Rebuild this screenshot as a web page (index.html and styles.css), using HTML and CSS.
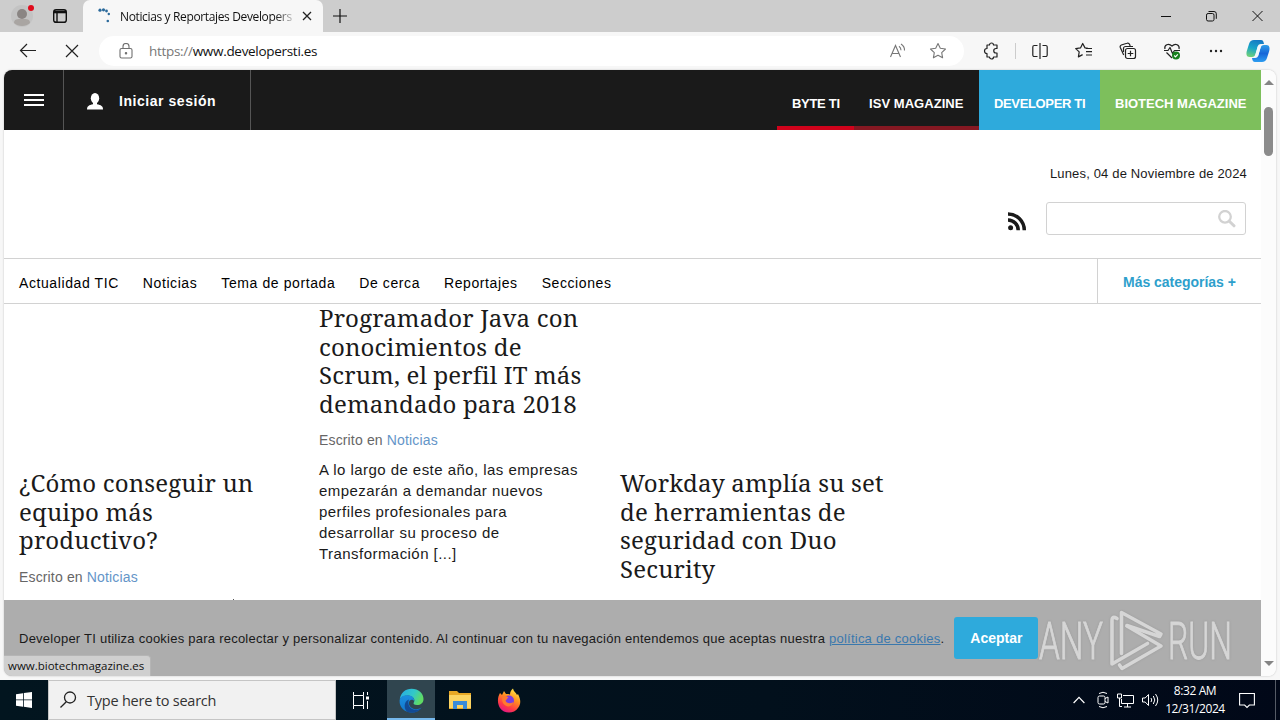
FILE: index.html
```html
<!DOCTYPE html>
<html lang="es">
<head>
  <meta charset="UTF-8" />
  <title>Noticias y Reportajes Developers</title>
  <link rel="stylesheet" href="styles.css">
</head>
<body>

<div class="tabstrip">
  <svg class="profile" width="24" height="26" viewBox="0 0 24 26">
    <circle cx="12" cy="13" r="11" fill="#c3c3c3"/>
    <circle cx="12" cy="11" r="5" fill="#8a8583"/>
    <path d="M4 20c0-4 3-4 8-4s8 0 8 4c-2 2-5 3-8 3s-6-1-8-3z" fill="#a9a5a2"/>
    <circle cx="21" cy="5" r="3" fill="#e00b1c"/>
  </svg>
  <svg class="tab-menu" width="16" height="16" viewBox="0 0 16 16" fill="none" stroke="#111" stroke-width="1.4">
    <rect x="1.7" y="1.7" width="12.6" height="12.6" rx="2.4"/>
    <path d="M2 4h12" stroke-width="2.6"/>
    <path d="M5 4v10"/>
  </svg>
  <div class="tab">
    <svg class="spinner" width="16" height="16" viewBox="0 0 16 16" fill="#2b6a9b">
      <circle cx="3" cy="2.2" r="1.6"/><circle cx="6.5" cy="1.8" r="1.6"/><circle cx="9.5" cy="3" r="1.4"/>
      <circle cx="11.8" cy="6" r="1.2"/><circle cx="10.8" cy="13" r="1.3"/>
    </svg>
    <span class="tab-title">Noticias y Reportajes Developers</span>
    <svg width="10" height="10" viewBox="0 0 10 10" stroke="#222" stroke-width="1.3"><path d="M1 1l8 8M9 1l-8 8"/></svg>
  </div>
  <svg class="new-tab" width="14" height="14" viewBox="0 0 14 14" stroke="#111" stroke-width="1.2"><path d="M7 0v14M0 7h14"/></svg>
  <div class="window-buttons">
    <svg width="10" height="12" viewBox="0 0 10 12" stroke="#111"><path d="M0 6.5h10"/></svg>
    <svg width="11" height="12" viewBox="0 0 11 12" fill="none" stroke="#111"><rect x=".5" y="3.5" width="7.5" height="7.5" rx="1.6"/><path d="M2.5 1.5h5.5a2.3 2.3 0 0 1 2.3 2.3v5"/></svg>
    <svg width="11" height="12" viewBox="0 0 11 12" stroke="#111"><path d="M.5 1l10 10M10.5 1l-10 10"/></svg>
  </div>
</div>

<div class="toolbar">
  <svg class="back" width="18" height="16" viewBox="0 0 18 16" fill="none" stroke="#222" stroke-width="1.2"><path d="M17 7.5H1.5M8 1L1.5 7.5 8 14"/></svg>
  <svg class="stop" width="14" height="14" viewBox="0 0 14 14" stroke="#222" stroke-width="1.2"><path d="M1 1l12 12M13 1L1 13"/></svg>
  <div class="address">
    <svg class="lock" width="14" height="16" viewBox="0 0 14 16" fill="none" stroke="#707070" stroke-width="1.1">
      <rect x="1" y="5.5" width="12" height="9.5" rx="1.6"/><path d="M4 5.5V3.5a3 3 0 0 1 6 0v2"/><circle cx="7" cy="10.2" r=".7" fill="#707070"/>
    </svg>
    <span class="url"><i>https://</i>www.developersti.es</span>
    <svg class="read" width="18" height="16" viewBox="0 0 18 16" fill="none" stroke="#777" stroke-width="1.1">
      <path d="M1.5 14L6.5 2.5l5 11.5M3.2 10.5h6.6M10 3.2q2 1.5 2 4M12 1q3.8 2.5 3.5 6.5"/>
    </svg>
    <svg class="star" width="18" height="18" viewBox="0 0 18 18" fill="none" stroke="#777" stroke-width="1.1" stroke-linejoin="round">
      <path d="M9 1.5l2.3 4.8 5.2.7-3.8 3.6.9 5.2L9 13.3l-4.6 2.5.9-5.2L1.5 7l5.2-.7z"/>
    </svg>
  </div>
  <div class="tools">
    <svg width="18" height="18" viewBox="0 0 18 18" fill="none" stroke="#222" stroke-width="1.2" stroke-linejoin="round">
      <path d="M5 3h2.500a2 2 0 0 1 4 0h3.500v3.500h-1a2 2 0 0 0 0 4.500h1v4h-3.500a2 2 0 0 1-4 0H5v-3.500a2.300 2.300 0 0 1 0-5z"/>
    </svg>
    <b class="divider"></b>
    <svg width="18" height="18" viewBox="0 0 18 18" fill="none" stroke="#222" stroke-width="1.2">
      <path d="M9 1v16M6.5 3.5H3.2a1.4 1.4 0 0 0-1.4 1.4v8.2a1.4 1.4 0 0 0 1.4 1.4h3.3M11.500 3.500h3.300a1.400 1.400 0 0 1 1.400 1.400v8.200a1.400 1.400 0 0 1-1.400 1.400h-3.300"/>
    </svg>
    <svg width="18" height="18" viewBox="0 0 18 18" fill="none" stroke="#222" stroke-width="1.2" stroke-linejoin="round">
      <path d="M13 6.3l-3-.4L7.7 1.5 5.5 5.9l-4.8.7 3.5 3.3-.8 5 4.2-2.3M11 6.5h6M11 9.700h6M11 13h6"/>
    </svg>
    <svg width="18" height="18" viewBox="0 0 18 18" fill="none" stroke="#222" stroke-width="1.2" stroke-linejoin="round">
      <rect x="6.5" y="6.5" width="10" height="10" rx="2"/><path d="M11.5 8.7v5.6M8.7 11.5h5.6M4.700 13L1.300 5.500A2 2 0 0 1 2.300 3L8 1.300a2 2 0 0 1 2.500 1l.7 1.700M4.500 10V6.500a2 2 0 0 1 2-2H14"/>
    </svg>
    <svg width="18" height="18" viewBox="0 0 18 18" fill="none" stroke="#222" stroke-width="1.2" stroke-linejoin="round">
      <path d="M2 7C.8 3 5.5.5 9 4c3.5-3.5 8-1 7 3M1 8.500h4l2-3 2.500 6 2-3h5.500M3.500 10.500L9 16"/>
      <circle cx="13" cy="13.5" r="4" fill="#16801c" stroke="none"/><path d="M11.2 13.5l1.3 1.3 2.3-2.4" stroke="#fff"/>
    </svg>
    <svg width="18" height="18" viewBox="0 0 18 18" fill="#222"><circle cx="4" cy="9" r="1.2"/><circle cx="9" cy="9" r="1.2"/><circle cx="14" cy="9" r="1.2"/></svg>
  </div>
  <svg class="copilot" width="24" height="24" viewBox="0 0 24 24">
    <defs>
      <linearGradient id="cp1" x1=".6" y1="0" x2=".3" y2="1"><stop offset="0" stop-color="#1579c4"/><stop offset=".5" stop-color="#18a5c9"/><stop offset="1" stop-color="#6fd07a"/></linearGradient>
      <linearGradient id="cp2" x1="0" y1="0" x2="0" y2="1"><stop offset="0" stop-color="#2f9ee8"/><stop offset=".5" stop-color="#1766d8"/><stop offset="1" stop-color="#2d9df0"/></linearGradient>
    </defs>
    <path d="M8 1h7c2 0 2.5 1.5 3 4h-3c-2 0-3 1-3.5 3l-2 7c-.6 2-1.5 3-3.5 3H3.500C.5 18 0 15 .8 12L3 5c.8-2.500 2.500-4 5-4z" fill="url(#cp1)"/>
    <path d="M16 23H9c-2 0-2.5-1.5-3-4h3c2 0 3-1 3.5-3l2-7c.6-2 1.500-3 3.500-3h2.500c3 0 3.500 3 2.700 6L21 19c-.8 2.500-2.500 4-5 4z" fill="url(#cp2)"/>
    <path d="M12 7h3l-3 10H9z" fill="#f2f8fc"/>
  </svg>
</div>

<div class="viewport">
  <div class="page">
    <header class="topbar">
      <div class="burger"><span></span><span></span><span></span></div>
      <div class="login">
        <svg width="16" height="17" viewBox="0 0 16 17" fill="#fff"><ellipse cx="8" cy="5.3" rx="4.2" ry="5.2"/><path d="M0 16.5c0-3.5 2-4.5 6-5.3V9h4v2.200c4 .8 6 1.800 6 5.300z"/></svg>
        Iniciar sesión
      </div>
      <nav class="sites">
        <a class="byte">BYTE TI</a>
        <a class="isv">ISV MAGAZINE</a>
        <a class="dev">DEVELOPER TI</a>
        <a class="bio">BIOTECH MAGAZINE</a>
      </nav>
    </header>

    <div class="masthead">
      <div class="date">Lunes, 04 de Noviembre de 2024</div>
      <div class="search-row">
        <svg class="rss" width="19" height="19" viewBox="0 0 19 19" fill="none" stroke="#1a1a1a" stroke-width="3.5">
          <circle cx="2.6" cy="15.8" r="2.5" fill="#1a1a1a" stroke="none"/><path d="M0 8a10.200 10.200 0 0 1 10.200 10.300M0 1.900a16.300 16.300 0 0 1 16.300 16.400"/>
        </svg>
        <div class="search-box">
          <svg width="18" height="18" viewBox="0 0 18 18" fill="none" stroke="#d2d2d2"><circle cx="7" cy="6.8" r="5.8" stroke-width="2.3"/><path d="M11.3 11.2l4.7 4.6" stroke-width="3" stroke-linecap="round"/></svg>
        </div>
      </div>
    </div>

    <nav class="categories">
      <a>Actualidad TIC</a>
      <a>Noticias</a>
      <a>Tema de portada</a>
      <a>De cerca</a>
      <a>Reportajes</a>
      <a>Secciones</a>
      <a class="more">Más categorías +</a>
    </nav>

    <main class="articles">
      <article class="lower">
        <h2>¿Cómo conseguir un<br>equipo más<br>productivo?</h2>
        <p class="meta">Escrito en <a>Noticias</a></p>
        <div class="accent"></div>
      </article>
      <article>
        <h2>Programador Java con<br>conocimientos de<br>Scrum, el perfil IT más<br>demandado para 2018</h2>
        <p class="meta">Escrito en <a>Noticias</a></p>
        <p class="excerpt">A lo largo de este año, las empresas<br>empezarán a demandar nuevos<br>perfiles profesionales para<br>desarrollar su proceso de<br>Transformación [...]</p>
      </article>
      <article class="lower">
        <h2>Workday amplía su set<br>de herramientas de<br>seguridad con Duo<br>Security</h2>
      </article>
    </main>

    <div class="cookies">
      <span>Developer TI utiliza cookies para recolectar y personalizar contenido. Al continuar con tu navegación entendemos que aceptas nuestra <a>política de cookies</a>.</span>
      <button>Aceptar</button>
    </div>
    <div class="status">www.biotechmagazine.es</div>
  </div>
  <div class="scrollbar">
    <i class="up"></i>
    <div class="thumb"></div>
    <i class="down"></i>
  </div>
  <svg class="watermark" width="210" height="66" viewBox="0 0 210 66" fill="none" stroke="#d6d6d6">
    <g class="watermark-text" fill="#d6d6d6">
      <text x="2" y="51" textLength="64" lengthAdjust="spacingAndGlyphs">ANY</text>
      <text x="131" y="51" textLength="64" lengthAdjust="spacingAndGlyphs">RUN</text>
    </g>
    <g stroke-width="3.6" stroke-linejoin="round" stroke-linecap="round">
      <path d="M84.5 45.5V4.5L124 26l-1.5 2.5L90 17.500"/>
      <path d="M80 10.500q-5-3-5 2v43.500l35.500-20.500"/>
      <path d="M90 18l34 20L85 60.500l-2.500-3.500"/>
    </g>
  </svg>
</div>

<div class="taskbar">
  <div class="start"><svg width="16" height="16" viewBox="0 0 16 16" fill="#fff"><path d="M0 2.2L7 1.2v6.3H0zM7.8 1.1L16 0v7.5H7.800zM0 8.300h7v6.400l-7-1zM7.800 8.300H16V16l-8.200-1.200z"/></svg></div>
  <div class="search">
    <svg width="17" height="18" viewBox="0 0 17 18" fill="none" stroke="#222" stroke-width="1.3"><circle cx="10" cy="6.5" r="5.5"/><path d="M6.3 10.7L.5 16.5"/></svg>
    Type here to search
  </div>
  <div class="app taskview">
    <svg width="16" height="17" viewBox="0 0 16 17" fill="none" stroke="#fff"><path d="M.5 0v3.5h10V0M.5 17v-3.5h10V17M.5 3.500v10M10.500 3.500v10M14.500 0v3M14.500 9v8"/><path d="M13 6h3" stroke-width="3"/></svg>
  </div>
  <div class="app active">
    <svg width="25" height="25" viewBox="0 0 25 25">
      <defs>
        <linearGradient id="e1" x1="0" y1="0" x2="1" y2=".4"><stop offset="0" stop-color="#26a9e8"/><stop offset=".6" stop-color="#32c8c8"/><stop offset="1" stop-color="#5fdb65"/></linearGradient>
        <linearGradient id="e2" x1="0" y1="0" x2="0" y2="1"><stop offset="0" stop-color="#1b8fe0"/><stop offset="1" stop-color="#1277cc"/></linearGradient>
      </defs>
      <path d="M.8 11C1.8 4.5 6.5.7 12.5.7c7 0 12 4.8 12 10.3 0 4-3 6-6.500 6-3 0-4-1.300-3.200-2.500 2-3-1-7-5.800-7-4 0-7 1.600-8.200 3.500z" fill="url(#e1)"/>
      <path d="M.6 12.5C1 8.5 5 7.2 8.7 7.2c4.3 0 7 2.8 6.5 5.8-1-1.300-3-1.800-4.300-.5-2.800 3 .4 8.700 6.100 8.700 2 0 4-.7 5.500-1.600-2 3-5.500 5-9.800 5C5.500 24.600.2 19 .6 12.500z" fill="url(#e2)"/>
      <path d="M8.5 24c-4-3-4-10.5 1.5-12.5-2 4 .5 10.5 7.5 10.3 1.800-.1 3.500-.7 5-1.800-3 4.500-9 5.800-14 4z" fill="#124a94"/>
    </svg>
  </div>
  <div class="app">
    <svg width="22" height="20" viewBox="0 0 22 20"><path d="M0 1h8l2 2h12v16H0z" fill="#e8a825"/><path d="M0 5h22v13H0z" fill="#fcd462"/><path d="M4 19v-8h14v8h-4v-4H8v4z" fill="#3a8bd8"/></svg>
  </div>
  <div class="app">
    <svg width="24" height="25" viewBox="0 0 24 25">
      <defs><linearGradient id="ff" x1=".8" y1="0" x2=".3" y2="1"><stop offset="0" stop-color="#fff04a"/><stop offset=".4" stop-color="#ff9220"/><stop offset=".75" stop-color="#ff3a45"/><stop offset="1" stop-color="#e31587"/></linearGradient></defs>
      <path d="M3 5l2 2 2-4 2 3c2 0 3 0 4 .5C13 4 14 2 16 .5c.5 3 3 4 4 6.500l1-1c3 6 3 10 0 14-4 6-14 6-18 0C0 15 .5 9 3 5z" fill="url(#ff)"/>
      <circle cx="12" cy="12.5" r="5" fill="#7a3de0"/><path d="M5.5 9c3-1.5 5-1 6 1-2 0-1.500 2-3 2.500 1 3 4.500 3.500 8 1.500-1 4-5 5.500-8 3.500-2.500-1.500-4-4.500-3-8.500z" fill="#ff7a2e"/>
    </svg>
  </div>
  <div class="tray">
    <svg width="12" height="8" viewBox="0 0 12 8" fill="none" stroke="#fff" stroke-width="1.2"><path d="M.6 7L6 1.3 11.4 7"/></svg>
    <svg width="12" height="18" viewBox="0 0 12 18" fill="none" stroke="#fff"><rect x="1" y="5" width="7" height="8" rx="1.5"/><path d="M8 7.5l3-1.5v6l-3-1.5M2 2.500q4-2.500 8 0M2 15.500q4 2.500 8 0"/></svg>
    <svg width="17" height="15" viewBox="0 0 17 15" fill="none" stroke="#fff"><path d="M6 2.5h10.5v8H4.5V6M10.5 10.500V14M7 14h7M.5 1h4v4h-4zM2.500 5v8.500H5"/></svg>
    <svg width="17" height="14" viewBox="0 0 17 14" fill="none" stroke="#fff"><path d="M.5 5h2.7L6.5 1.5v11L3.2 9H.5zM9 5q1.500 2 0 4M11.300 3q3 4 0 8M13.500 1q4.500 6 0 12"/></svg>
  </div>
  <div class="clock">8:32 AM<br>12/31/2024</div>
  <svg class="notify" width="16" height="17" viewBox="0 0 16 17" fill="none" stroke="#fff" stroke-width="1.1"><path d="M.6 1.5h14.8V13h-5L8 15.5 5.600 13h-5z"/></svg>
  <b class="desktop-edge"></b>
</div>

</body>
</html>
```
FILE: styles.css
```css
* {
  box-sizing: border-box;
}

body {
  margin: 0;
  width: 1280px;
  height: 720px;
  overflow: hidden;
  display: flex;
  flex-direction: column;
  background: #f7f7f7;
  font-family: "Liberation Sans", sans-serif;
  color: #1a1a1a;
}

svg {
  display: block;
  flex: none;
}

/* browser window */
.tabstrip {
  height: 32px;
  flex: none;
  display: flex;
  align-items: center;
  background: #cdcdcd;
  padding-left: 10px;
}

.tab-menu {
  margin-left: 18px;
}

.tab {
  align-self: stretch;
  width: 240px;
  margin-left: 15px;
  padding: 0 11px 0 14px;
  display: flex;
  align-items: center;
  background: #f7f7f7;
  border-radius: 7px 7px 0 0;
}

.tab-title {
  flex: 1;
  margin-left: 7px;
  overflow: hidden;
  white-space: nowrap;
  font: 12px "Open Sans", sans-serif;
  letter-spacing: -0.36px;
  color: #111;
  -webkit-mask-image: linear-gradient(90deg, #000 155px, transparent 178px);
}

.new-tab {
  margin-left: 10px;
}

.window-buttons {
  margin-left: auto;
  margin-right: 17px;
  display: flex;
  gap: 35px;
}

.toolbar {
  height: 38px;
  flex: none;
  display: flex;
  align-items: center;
  padding-left: 19px;
}

.stop {
  margin-left: 28px;
}

.address {
  width: 865px;
  height: 30px;
  margin-left: 20px;
  padding: 0 17px 0 20px;
  border-radius: 15px;
  background: #fff;
  display: flex;
  align-items: center;
}

.url {
  margin-left: 16px;
  font: 13.5px "Open Sans", sans-serif;
  letter-spacing: -0.3px;
  color: #111;
}

.url i {
  font-style: normal;
  color: #777;
}

.read {
  margin-left: auto;
}

.star {
  margin-left: 22px;
}

.tools {
  display: flex;
  align-items: center;
  gap: 26px;
  margin-left: 18px;
}

.divider {
  width: 1px;
  height: 16px;
  background: #ccc;
  margin: 0 -11px;
}

.copilot {
  margin-left: 21px;
}

/* page */
.viewport {
  position: relative;
  flex: none;
  height: 606px;
  margin: 0 4px 4px;
  display: flex;
  border-radius: 8px;
  overflow: hidden;
  background: #fff;
  box-shadow: 0 0 2px #bbb;
}

.page {
  position: relative;
  width: 1257px;
  overflow: hidden;
}

.topbar {
  height: 60px;
  display: flex;
  background: #1a1a1a;
  color: #fff;
}

.burger {
  width: 60px;
  border-right: 1px solid #555;
  display: flex;
  flex-direction: column;
  align-items: center;
  justify-content: center;
  gap: 3px;
}

.burger span {
  width: 20px;
  height: 2px;
  background: #fff;
}

.login {
  width: 187px;
  padding: 2px 0 0 23px;
  border-right: 1px solid #555;
  display: flex;
  align-items: center;
  gap: 16px;
  font-size: 14px;
  font-weight: bold;
  letter-spacing: 0.55px;
}

.sites {
  display: flex;
  margin-left: auto;
}

.sites a {
  padding: 0 15px;
  line-height: 67px;
  height: 60px;
  font-size: 13px;
  font-weight: bold;
  white-space: nowrap;
}

.byte {
  width: 77px;
  border-bottom: 4px solid #d0021b;
  letter-spacing: -0.3px;
}

.isv {
  width: 125px;
  border-bottom: 4px solid #861822;
  letter-spacing: 0.05px;
}

.dev {
  width: 121px;
  background: #2eaadc;
  letter-spacing: -0.35px;
}

.bio {
  width: 161px;
  background: #7dbf5c;
}

.masthead {
  height: 128px;
  padding: 36px 14px 0;
  display: flex;
  flex-direction: column;
  align-items: flex-end;
}

.date {
  font-size: 13px;
  line-height: 16px;
  letter-spacing: 0.16px;
}

.search-row {
  display: flex;
  align-items: center;
  gap: 19px;
  margin: 20px 1px 0 0;
}

.rss {
  margin-top: 5px;
}

.search-box {
  width: 200px;
  height: 33px;
  border: 1px solid #d2d2d2;
  border-radius: 3px;
  padding: 7px 9px;
  display: flex;
  justify-content: flex-end;
}

.categories {
  height: 46px;
  border-top: 1px solid #d2d2d2;
  border-bottom: 1px solid #d2d2d2;
  padding-left: 15px;
  display: flex;
  gap: 24px;
  font-size: 14px;
  line-height: 48px;
  letter-spacing: 0.59px;
  color: #000;
}

.categories .more {
  width: 164px;
  margin-left: auto;
  border-left: 1px solid #d2d2d2;
  padding-left: 25px;
  font-weight: bold;
  letter-spacing: -0.02px;
  line-height: 46px;
  color: #2e9fcc;
}

.articles {
  display: grid;
  grid-template-columns: 270px 271px 280px;
  column-gap: 30px;
  padding: 0 15px;
}

.lower {
  padding-top: 165px;
}

h2 {
  margin: 0;
  font: 24px/28.6px "Noto Serif", "DejaVu Serif", serif;
  letter-spacing: 0.16px;
  white-space: nowrap;
}

.meta {
  margin: 13px 0 0;
  font-size: 14px;
  line-height: 18px;
  letter-spacing: 0.15px;
  color: #666;
}

.meta a {
  color: #6495c8;
}

.excerpt {
  margin: 10px 0 0;
  font-size: 15px;
  line-height: 21px;
  letter-spacing: 0.45px;
  white-space: nowrap;
}

.accent {
  width: 1px;
  height: 2px;
  margin: 13px 0 0 214px;
  background: #555;
}

.cookies {
  position: absolute;
  left: 0;
  right: 0;
  bottom: 0;
  height: 76px;
  padding-left: 15px;
  display: flex;
  align-items: center;
  background: #adadad;
  font-size: 13px;
  letter-spacing: 0.24px;
  white-space: nowrap;
}

.cookies a {
  color: #3a78ad;
  text-decoration: underline;
}

.cookies button {
  width: 84px;
  height: 42px;
  margin-left: 10px;
  border: 0;
  border-radius: 3px;
  background: #2eaadc;
  color: #fff;
  font: bold 14px "Liberation Sans", sans-serif;
}

.status {
  position: absolute;
  left: 0;
  bottom: 0;
  width: 147px;
  height: 21px;
  padding-left: 4px;
  border: 1px solid #b5b5b5;
  border-left: 0;
  border-bottom: 0;
  border-radius: 0 4px 0 0;
  background: #cfcfcf;
  font: 11.5px/19px "Open Sans", sans-serif;
  color: #111;
}

.scrollbar {
  width: 15px;
  background: #fcfcfc;
  display: flex;
  flex-direction: column;
  align-items: center;
  padding: 10px 0;
}

.scrollbar .up,
.scrollbar .down {
  border: 5px solid transparent;
}

.scrollbar .up {
  border-top: 0;
  border-bottom: 5px solid #858585;
}

.scrollbar .down {
  border-bottom: 0;
  border-top: 5px solid #858585;
  margin-top: auto;
}

.thumb {
  width: 9px;
  height: 49px;
  margin-top: 22px;
  border-radius: 5px;
  background: #8b8b8b;
}

.watermark {
  position: absolute;
  left: 1033px;
  top: 538px;
  filter: drop-shadow(0 0 1px #999);
}

.watermark-text {
  font-family: Roboto, sans-serif;
  font-size: 52px;
  font-weight: 300;
  stroke-width: 1px;
}

/* windows taskbar */
.taskbar {
  height: 40px;
  flex: none;
  display: flex;
  align-items: center;
  background: linear-gradient(90deg, #02151f, #02101c 60%, #010818);
  color: #fff;
}

.start {
  width: 48px;
  display: flex;
  justify-content: center;
}

.search {
  width: 288px;
  height: 40px;
  padding-left: 11px;
  display: flex;
  align-items: center;
  gap: 10px;
  background: #f1f1f1;
  border: 1px solid #c5c5c5;
  font: 14.5px "Open Sans", sans-serif;
  letter-spacing: -0.22px;
  color: #333;
}

.app {
  width: 49px;
  height: 40px;
  display: flex;
  align-items: center;
  justify-content: center;
}

.taskview {
  width: 51px;
  padding-right: 2px;
}

.app.active {
  width: 48px;
  background: #30454f;
  border-bottom: 2px solid #76b9ed;
  padding-top: 2px;
}

.tray {
  margin-left: auto;
  display: flex;
  align-items: center;
  gap: 12px;
}

.tray svg:nth-child(n + 3) {
  margin-left: -4px;
}

.clock {
  width: 72px;
  font: 12px/18px "Open Sans", sans-serif;
  letter-spacing: -0.4px;
  text-align: center;
}

.notify {
  margin-left: 8px;
}

.desktop-edge {
  width: 1px;
  height: 40px;
  margin: 0 4px 0 20px;
  background: #555b66;
}
```
